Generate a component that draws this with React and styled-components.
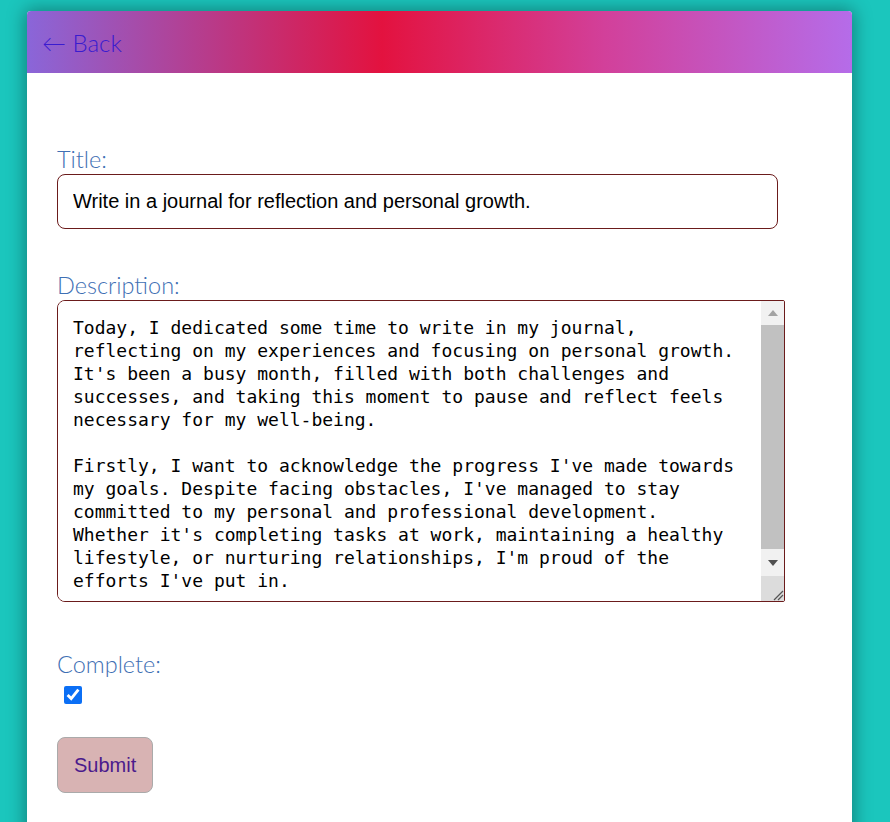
import React, {useState} from 'react';
import styled, {createGlobalStyle} from 'styled-components';

const GlobalStyle = createGlobalStyle`
  body {
    margin: 0;
    background: #1bc6bd;
    font-family: "Lato", "Noto Sans", sans-serif;
  }
`;

const Card = styled.section`
  width: 825px;
  margin: 11px 0 0 27px;
  min-height: 830px;
  background: #fff;
  border-radius: 4px 4px 0 0;
  box-shadow: 0px 0px 18px 2px rgba(0,0,0,0.35);
  overflow: hidden;
`;

const Header = styled.header`
  height: 62px;
  display: flex;
  align-items: center;
  padding-left: 15px;
  background: linear-gradient(to right, #8a66d9 0%, #e3123f 43%, #d2409a 70%, #b56ce9 100%);
`;

const BackLink = styled.a`
  color: #3a1ccf;
  font-size: 24px;
  font-weight: 300;
  text-decoration: none;
  cursor: pointer;
`;

const Form = styled.form`
  display: flex;
  flex-direction: column;
  align-items: flex-start;
  padding: 73px 30px 40px;
`;

const Label = styled.label`
  font-size: 23.5px;
  font-weight: 300;
  line-height: 26px;
  padding-bottom: 2px;
  color: #3f70b4;
`;

const Field = styled.div`
  display: flex;
  flex-direction: column;
  align-items: flex-start;
  margin-bottom: ${props => props.gap || 43}px;
`;

const TextInput = styled.input`
  box-sizing: border-box;
  width: ${props => props.width}px;
  height: 55px;
  padding: 0 15px;
  border: 1px solid #6b1b1b;
  border-radius: 8px;
  font-family: "Liberation Sans", Arial, sans-serif;
  font-size: 20px;
  color: #000;
  outline: none;
`;

const AreaBox = styled.div`
  box-sizing: border-box;
  width: 728px;
  height: 302px;
  display: flex;
  border: 1px solid #6b1b1b;
  border-radius: 8px 2px 2px 8px;
  overflow: hidden;
`;

const TextArea = styled.textarea`
  flex: 1;
  min-width: 0;
  margin: 0;
  padding: 15px 20px 15px 15px;
  border: none;
  resize: none;
  font-family: "DejaVu Sans Mono", monospace;
  font-size: 18px;
  line-height: 23px;
  color: #000;
  outline: none;
  overflow: hidden;
`;

const ScrollBar = styled.div`
  width: 23px;
  display: flex;
  flex-direction: column;
  background: #f1f1f1;
`;

const ScrollButton = styled.div`
  height: ${props => props.h}px;
  display: flex;
  align-items: center;
  justify-content: center;
`;

const ScrollThumb = styled.div`
  flex: 1;
  background: #c1c1c1;
`;

const Resizer = styled.div`
  height: 25px;
  display: flex;
  align-items: flex-end;
  justify-content: flex-end;
  background: #dcdcdc;
`;

const Checkbox = styled.input`
  width: 18px;
  height: 18px;
  margin: 7px 0 0 7px;
  accent-color: #0b6ff5;
`;

const SubmitButton = styled.button`
  height: 56px;
  padding: 0 16px;
  background: #d8b3b3;
  border: 1px solid #aaa;
  border-radius: 8px;
  color: #4b1a8c;
  font-family: "Liberation Sans", Arial, sans-serif;
  font-size: 20px;
  cursor: pointer;
`;

const journal = `Today, I dedicated some time to write in my journal, reflecting on my experiences and focusing on personal growth. It's been a busy month, filled with both challenges and successes, and taking this moment to pause and reflect feels necessary for my well-being.

Firstly, I want to acknowledge the progress I've made towards my goals. Despite facing obstacles, I've managed to stay committed to my personal and professional development. Whether it's completing tasks at work, maintaining a healthy lifestyle, or nurturing relationships, I'm proud of the efforts I've put in.
`;

export default function App() {
  const [title, setTitle] = useState('Write in a journal for reflection and personal growth.');
  const [description, setDescription] = useState(journal);
  const [complete, setComplete] = useState(true);

  return (
    <>
      <GlobalStyle />
      <Card>
        <Header>
          <BackLink>← Back</BackLink>
        </Header>
        <Form onSubmit={e => e.preventDefault()}>
          <Field>
            <Label htmlFor='title'>Title:</Label>
            <TextInput
              id='title'
              type='text'
              width={721}
              value={title}
              onChange={e => setTitle(e.target.value)}
            />
          </Field>
          <Field gap={49}>
            <Label htmlFor='description'>Description:</Label>
            <AreaBox>
              <TextArea
                id='description'
                value={description}
                onChange={e => setDescription(e.target.value)}
              />
              <ScrollBar>
                <ScrollButton h={24}>
                  <svg width='10' height='6' viewBox='0 0 10 6'>
                    <polygon points='0,6 5,0 10,6' fill='#a3a3a3' />
                  </svg>
                </ScrollButton>
                <ScrollThumb />
                <ScrollButton h={27}>
                  <svg width='10' height='6' viewBox='0 0 10 6'>
                    <polygon points='0,0 10,0 5,6' fill='#505050' />
                  </svg>
                </ScrollButton>
                <Resizer>
                  <svg width='12' height='12' viewBox='0 0 12 12'>
                    <line x1='2' y1='11' x2='11' y2='2' stroke='#555' strokeWidth='1.2' />
                    <line x1='6' y1='11' x2='11' y2='6' stroke='#555' strokeWidth='1.2' />
                  </svg>
                </Resizer>
              </ScrollBar>
            </AreaBox>
          </Field>
          <Field gap={33}>
            <Label htmlFor='complete'>Complete:</Label>
            <Checkbox
              id='complete'
              type='checkbox'
              checked={complete}
              onChange={e => setComplete(e.target.checked)}
            />
          </Field>
          <SubmitButton type='submit'>Submit</SubmitButton>
        </Form>
      </Card>
    </>
  );
}
